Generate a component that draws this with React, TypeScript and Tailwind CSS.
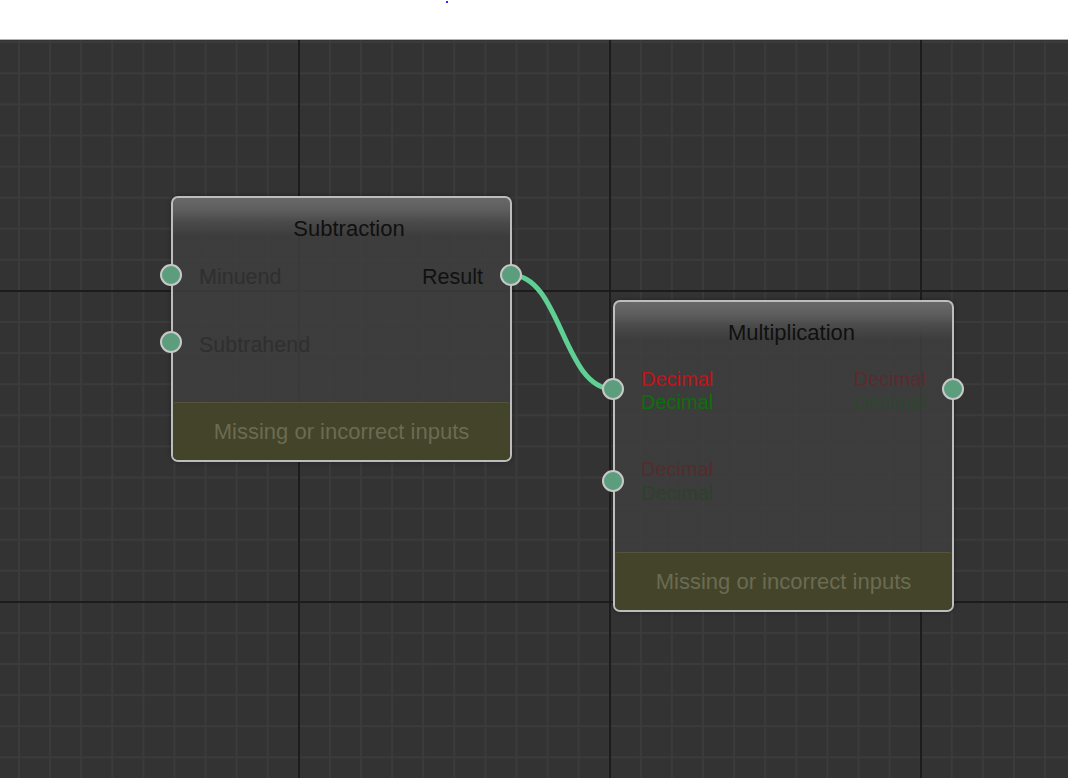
import React from "react";

function Port({ className }: { className: string }) {
  return (
    <div
      className={
        "absolute z-10 h-[22px] w-[22px] rounded-full border-2 border-[#c8c8c8] bg-[#5b9d7c] " +
        className
      }
    />
  );
}

function Footer() {
  return (
    <div className="mt-auto flex h-[58px] items-center justify-center rounded-b-[5px] rounded-t-[3px] border-t border-[#55553b] bg-[#44442a] text-[22px] leading-[26px] text-[#6b6b52]">
      Missing or incorrect inputs
    </div>
  );
}

const nodeCls =
  "absolute flex flex-col rounded-[7px] border-2 border-[#bdbdbd] bg-[linear-gradient(to_bottom,#686868_0px,#5e5e5e_12px,#4a4a4a_24px,rgba(62,62,62,0.86)_38px)] shadow-[0_0_4px_rgba(0,0,0,0.35)]";

export default function App() {
  return (
    <div className="h-[778px] w-[1068px] overflow-hidden bg-white font-['Liberation_Sans',Arial,sans-serif]">
      <div className="h-[39px] pl-[446px] pt-[1px]">
        <div className="h-[2px] w-[2px] bg-[#2a2aff]" />
      </div>
      <div className="relative h-[739px] overflow-hidden border-t border-[#b0b0b8] bg-[#333333] [background-image:linear-gradient(to_right,#1c1c1c_2px,transparent_2px),linear-gradient(to_bottom,#1c1c1c_2px,transparent_2px),linear-gradient(to_right,#3b3b3b_2px,transparent_2px),linear-gradient(to_bottom,#3b3b3b_2px,transparent_2px)] [background-size:311px_100%,100%_311px,31.1px_100%,100%_31.1px] [background-position:298px_0,0_250px,18px_0,0_1.2px]">
        <svg
          className="absolute left-0 top-0"
          width="1068"
          height="739"
          viewBox="0 0 1068 739"
        >
          <path
            d="M511 235 C561 235 563 349 613 349"
            fill="none"
            stroke="#5fcf94"
            strokeWidth="5"
            strokeLinecap="round"
          />
        </svg>

        {/* Subtraction node */}
        <div className={nodeCls + " left-[171px] top-[156px] h-[266px] w-[341px]"}>
          <div className="pl-[15px] pt-[18px] text-center text-[22px] leading-[26px] text-[#101010]">
            Subtraction
          </div>
          <div className="relative mt-[22px] flex h-[26px] items-start justify-between pl-[26px] pr-[27px] text-[21.5px] leading-[26px]">
            <Port className="left-[-13px] top-[0px]" />
            <span className="text-[#2f2f2f]">Minuend</span>
            <span className="text-[#111111]">Result</span>
            <Port className="right-[-12px] top-[0px]" />
          </div>
          <div className="relative mt-[42px] flex h-[26px] items-start pl-[26px] text-[21.5px] leading-[26px]">
            <Port className="left-[-13px] top-[-1px]" />
            <span className="text-[#2f2f2f]">Subtrahend</span>
          </div>
          <Footer />
        </div>

        {/* Multiplication node */}
        <div className={nodeCls + " left-[613px] top-[260px] h-[312px] w-[341px]"}>
          <div className="pl-[16px] pt-[18px] text-center text-[22px] leading-[26px] text-[#101010]">
            Multiplication
          </div>
          <div className="relative mt-[21.6px] flex justify-between pl-[26px] pr-[26px] text-[20px] leading-[23.5px]">
            <Port className="left-[-13px] top-[10.4px]" />
            <div className="flex flex-col">
              <span className="text-[#c80f19]">Decimal</span>
              <span className="text-[#0b700b]">Decimal</span>
            </div>
            <div className="flex flex-col">
              <span className="text-[#5c2a2d]">Decimal</span>
              <span className="text-[#2e462f]">Decimal</span>
            </div>
            <Port className="right-[-12px] top-[10.4px]" />
          </div>
          <div className="relative mt-[43.7px] flex pl-[26px] text-[20px] leading-[23.5px]">
            <Port className="left-[-13px] top-[11.4px]" />
            <div className="flex flex-col">
              <span className="text-[#562b2d]">Decimal</span>
              <span className="text-[#2c422d]">Decimal</span>
            </div>
          </div>
          <Footer />
        </div>
      </div>
    </div>
  );
}
